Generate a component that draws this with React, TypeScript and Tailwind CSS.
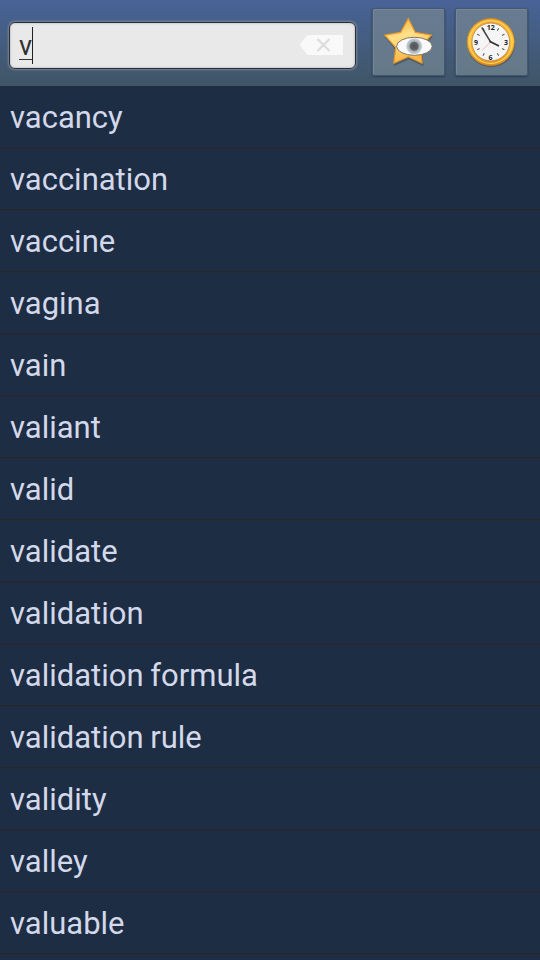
const words = [
  "vacancy",
  "vaccination",
  "vaccine",
  "vagina",
  "vain",
  "valiant",
  "valid",
  "validate",
  "validation",
  "validation formula",
  "validation rule",
  "validity",
  "valley",
  "valuable"
];

function ClearIcon() {
  return (
    <svg width="44" height="22" viewBox="0 0 44 22" className="relative -left-px -top-px" aria-hidden="true">
      <path d="M0.5 10.5 8 1.5Q8.5 1 9.5 1H44V21H9.5Q8.5 21 8 20.5Z" fill="#f9f9f9" />
      <path d="m18.5 5 12 12m0-12-12 12" stroke="#dddddd" strokeWidth="2.2" />
    </svg>
  );
}

function FavoritesIcon() {
  return (
    <svg width="72" height="68" viewBox="0 0 72 68" className="relative -left-px -top-px" aria-hidden="true">
      <defs>
        <linearGradient id="star" x1="0" y1="0" x2="0.3" y2="1">
          <stop offset="0" stopColor="#fba92c" />
          <stop offset="0.45" stopColor="#ffe08a" />
          <stop offset="1" stopColor="#fbb744" />
        </linearGradient>
        <radialGradient id="iris">
          <stop offset="0" stopColor="#505356" />
          <stop offset="0.48" stopColor="#626669" />
          <stop offset="0.62" stopColor="#a9b1b7" />
          <stop offset="0.9" stopColor="#c3cdd5" />
          <stop offset="1" stopColor="#e6ebef" />
        </radialGradient>
      </defs>
      <path
        d="M36.3 11 43.2 24.6 59.5 27.5 48.2 39.5 50.5 56 36.3 49.5 21.5 56 23.5 40.5 12.5 27.5 28.8 24.6Z"
        transform="translate(0.7 1.5)"
        fill="#39434c"
        opacity="0.5"
        stroke="#39434c"
        strokeLinejoin="round"
      />
      <path
        d="M36.3 10.5 43.2 24.3 59.3 27.2 48.2 39.5 50.2 55.2 36.3 48.7 21.8 55.2 23.8 39.7 12.8 27.2 28.8 24.3Z"
        fill="url(#star)"
        stroke="#e99828"
        strokeWidth="1.2"
        strokeLinejoin="round"
      />
      <ellipse
        cx="42.4"
        cy="38.3"
        rx="17.8"
        ry="9"
        fill="#fafafa"
        stroke="#746957"
        strokeWidth="0.9"
      />
      <circle cx="42.2" cy="38.3" r="8.2" fill="url(#iris)" />
    </svg>
  );
}

const ticks = [30, 60, 120, 150, 210, 240, 300, 330];

function HistoryIcon() {
  return (
    <svg width="72" height="68" viewBox="0 0 72 68" aria-hidden="true">
      <defs>
        <linearGradient id="rim" x1="0" y1="0" x2="0" y2="1">
          <stop offset="0" stopColor="#f0a02a" />
          <stop offset="0.45" stopColor="#ffc53e" />
          <stop offset="1" stopColor="#e18d1c" />
        </linearGradient>
      </defs>
      <circle cx="35.2" cy="34.2" r="24" fill="#39434c" opacity="0.5" />
      <circle cx="34.8" cy="33" r="23.6" fill="url(#rim)" stroke="#d48a20" strokeWidth="0.7" />
      <circle cx="34.8" cy="33" r="21.3" fill="none" stroke="#ffd45c" strokeWidth="1.2" />
      <circle cx="34.8" cy="33" r="18.9" fill="#f5f5f6" stroke="#b98538" strokeWidth="0.8" />
      {ticks.map((angle) => (
        <path
          key={angle}
          d="M34.8 17.2V20"
          transform={`rotate(${angle} 34.8 33)`}
          stroke="#555555"
          strokeWidth="1"
        />
      ))}
      <g
        className="font-['Open_Sans',sans-serif] text-[7px] font-bold"
        fill="#222222"
        textAnchor="middle"
      >
        <text x="34.8" y="21">12</text>
        <text x="50" y="35.8">3</text>
        <text x="34.4" y="50.8">6</text>
        <text x="20" y="35.8">9</text>
      </g>
      <path d="m34.5 33-8.5 8.5" stroke="#e9a49c" strokeWidth="0.7" />
      <path d="m35 33.7-9.2-15.2" stroke="#444444" strokeWidth="1.5" />
      <path d="m33.5 32.2 9.5 4.8" stroke="#333333" strokeWidth="1.8" />
    </svg>
  );
}

const buttonClass =
  "h-[68px] w-[73px] shrink-0 rounded-[2px] border border-[#46576e] bg-linear-to-b from-[#687b92] to-[#647988] shadow-[inset_1px_1px_0_#73869b,0_1px_2px_#263c55]";

export default function App() {
  return (
    <main className="h-[960px] w-[540px] overflow-hidden bg-[#1d2d43] font-[Roboto,sans-serif]">
      <header className="flex h-[86px] items-start bg-linear-to-b from-[#486397] to-[#405566] pt-2 pr-3 pl-[9px]">
        <div className="mt-3.5 flex h-[47px] w-[347px] shrink-0 items-center justify-between rounded-[6px] border border-[#252d3b] bg-[#e9e9e9] pr-[11px] pl-[9px] shadow-[inset_0_0_2px_1px_#d0cdcb,0_0_2px_1px_#7b8795]">
          <div className="flex h-[37px] items-start border-r border-[#222222]">
            <span className="mt-[6px] h-[27px] w-[13px] border-b border-[#333333] text-center text-[27px] leading-[27px] text-[#303030]">
              v
            </span>
          </div>
          <ClearIcon />
        </div>
        <button type="button" aria-label="Favorites" className={`${buttonClass} ml-4`}>
          <FavoritesIcon />
        </button>
        <button type="button" aria-label="History" className={`${buttonClass} ml-2.5`}>
          <HistoryIcon />
        </button>
      </header>
      <ul>
        {words.map((word) => (
          <li
            key={word}
            className="flex h-[62px] items-center border-b border-[#26262b] pt-[3px] pl-2.5 text-[31px] leading-9 text-[#d3d8ea] shadow-[0_1px_0_#222b39] [word-spacing:-1px]"
          >
            {word}
          </li>
        ))}
      </ul>
    </main>
  );
}
